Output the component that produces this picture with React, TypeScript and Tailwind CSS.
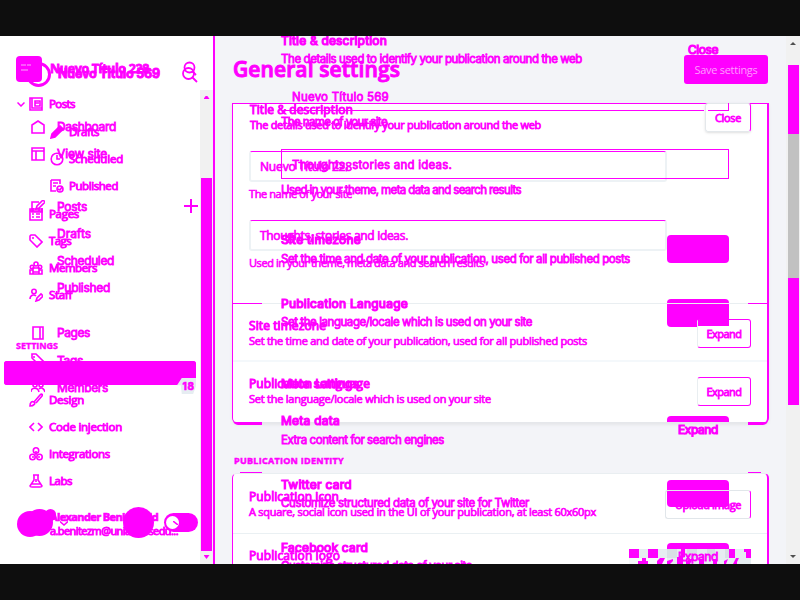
import { useLayoutEffect, useRef, useState, type ReactNode } from 'react';

const segoe = "font-['Open_Sans','Noto_Sans',sans-serif]";
const inter = "font-['Inter','Noto_Sans',sans-serif]";

/** One line of text whose tracking is fitted to the given width. */
function Line({ text, w, className = '' }: { text: string; w: number; className?: string }) {
  const ref = useRef<HTMLSpanElement>(null);
  const [spacing, setSpacing] = useState(0);
  useLayoutEffect(() => {
    if (ref.current) setSpacing((w - ref.current.getBoundingClientRect().width) / text.length);
  }, [text, w]);
  return (
    <span ref={ref} style={{ letterSpacing: spacing }} className={`inline-block whitespace-nowrap text-[#f0f] ${className}`}>
      {text}
    </span>
  );
}

function Icon({ children, className = '' }: { children: ReactNode; className?: string }) {
  return (
    <svg viewBox="0 0 14 14" className={`h-3.5 w-3.5 shrink-0 fill-none stroke-[#f0f] stroke-[1.6] ${className}`}>
      {children}
    </svg>
  );
}

function Item({ icon, text, w, sub = false }: { icon: ReactNode; text: string; w: number; sub?: boolean }) {
  return (
    <div className={`flex h-[27px] shrink-0 items-center ${sub ? 'gap-[5px] pl-[50px]' : 'gap-1.5 pl-[29px]'}`}>
      {icon}
      <Line text={text} w={w} className={`text-[11.5px] leading-4 [-webkit-text-stroke:0.9px_#f0f] ${segoe}`} />
    </div>
  );
}

function Sidebar() {
  return (
    <aside className="flex w-[215px] shrink-0 border-r-2 border-[#f0f] bg-white">
      <div className="flex w-[200px] flex-col">
        <header className="flex h-[54px] shrink-0 items-start pl-4 pt-5">
          <div className="h-[26px] w-[26px] rounded-[4px] bg-[#f0f]" />
          <Line text="Nuevo Título 228" w={99} className={`ml-2 text-[12.5px] font-bold leading-[26px] [-webkit-text-stroke:0.8px_#f0f] ${segoe}`} />
        </header>
        <div className="relative">
          <Item text="Posts" w={26} icon={<Icon><path d="M1 1h12v12H1z M3 1v10h10 M6 4h5v5H6z M6 6h4" /></Icon>} />
          <svg viewBox="0 0 8 5" className="absolute left-[17px] top-3 h-[5px] w-2 fill-none stroke-[#f0f] stroke-[1.5]"><path d="M.5.5 4 4 7.5.5" /></svg>
        </div>
        <div className="mt-px">
          <Item sub text="Drafts" w={30} icon={<Icon><path className="fill-[#f0f]" d="M1 13l1-4 8-8 3 3-8 8z" /></Icon>} />
          <Item sub text="Scheduled" w={54} icon={<Icon><circle cx="7" cy="7" r="5.8" /><path d="M7 3v4h3" /></Icon>} />
          <Item sub text="Published" w={49} icon={<Icon><path d="M1 1h9v4 M1 1v11h5 M3 4h5 M3 7h3" /><circle cx="10" cy="10" r="3" /><path d="M8 10l2 1 2-3" /></Icon>} />
        </div>
        <div className="mt-px">
          <Item text="Pages" w={30} icon={<Icon><path d="M1 2h12v11H1z M1 4h12 M4 1v3 M10 1v3 M3 7h2 M7 7h4 M3 10h2 M7 10h4" /></Icon>} />
          <Item text="Tags" w={22} icon={<Icon><path d="M1 2v4l7 7 5-5-7-7H2z M4 3v2" /></Icon>} />
          <Item text="Members" w={48} icon={<Icon><circle cx="7" cy="3" r="2" /><circle cx="3" cy="6" r="1.7" /><circle cx="11" cy="6" r="1.7" /><path d="M1 13V9h3V7h6v2h3v4z M4 9v4 M10 9v4 M4 11h6" /></Icon>} />
          <Item text="Staff" w={23} icon={<Icon><circle cx="5" cy="3.5" r="2.2" /><path d="M1 11c0-4 4-5 6-3 M7 13l1-3 4-4 2 2-4 4z" /></Icon>} />
        </div>
        <Line text="SETTINGS" w={42} className={`ml-4 mt-[30px] self-start text-[9px] font-bold leading-4 [-webkit-text-stroke:0.4px_#f0f] ${segoe}`} />
        <div className="ml-1 mt-[7px] h-6 w-48 shrink-0 rounded-[3px] bg-[#f0f]" />
        <div className="mt-px">
          <Item text="Design" w={35} icon={<Icon><path d="M1 13c0-4 2-5 4-4s0 4-4 4z M5 9l6-7c2-2 3 0 2 1L7 10" /></Icon>} />
          <Item text="Code injection" w={73} icon={<Icon><path d="M5 3 1 7l4 4 M9 3l4 4-4 4" /></Icon>} />
          <Item text="Integrations" w={61} icon={<Icon><circle cx="7" cy="3.5" r="2.7" /><circle cx="3.5" cy="10" r="2.7" /><circle cx="10.5" cy="10" r="2.7" /><path d="M7 4v4 M3 10h2 M9 10h2" /></Icon>} />
          <Item text="Labs" w={23} icon={<Icon><path d="M4 1h6 M5 1v5L1 12q0 1 2 1h8q2 0 2-1L9 6V1 M3 10h8 M7 5v3" /></Icon>} />
        </div>
        <footer className="mt-[16px] flex h-7 items-start">
          <div className="mt-px h-[26px] w-[26px] shrink-0 translate-x-[17px] rounded-full bg-[#f0f]" />
          <div className="ml-6 flex flex-col">
            <Line text="Alexander Benitez Md" w={108} className={`self-start text-[11px] font-bold leading-[14px] [-webkit-text-stroke:0.7px_#f0f] ${segoe}`} />
            <Line text="a.benitezm@uniandesedu..." w={128} className={`self-start text-[11px] leading-[14px] [-webkit-text-stroke:0.9px_#f0f] ${segoe}`} />
          </div>
        </footer>
      </div>
      <div className="mt-[54px] flex w-[13px] shrink-0 flex-col items-center bg-[#f1f1f1]">
        <div className="mt-1.5 h-[3px] w-1.5 bg-[#f0f] [clip-path:polygon(35%_0,65%_0,100%_100%,0_100%)]" />
        <div className="mt-[79px] h-[373px] w-[11px] bg-[#f0f]" />
        <div className="mt-1 h-1 w-1.5 bg-[#f0f] [clip-path:polygon(0_0,100%_0,50%_100%)]" />
      </div>
    </aside>
  );
}

function Setting({ title, tw, text, w, strip = false }: { title: string; tw: number; text: string; w: number; strip?: boolean }) {
  return (
    <div className="flex justify-between">
      <div className="-mt-px flex flex-col items-start">
        <Line text={title} w={tw} className={`text-[12px] leading-[15px] [-webkit-text-stroke:1px_#f0f] ${segoe}`} />
        <Line text={text} w={w} className={`text-[11px] leading-[15px] [-webkit-text-stroke:0.7px_#f0f] ${segoe}`} />
      </div>
      <div className="relative z-10 flex h-[29px] w-[54px] items-center justify-center rounded-[3px] border border-[#f0f] border-l-[#e9eef1] bg-white">
        {strip && <div className="absolute left-0 top-0 h-1.5 w-[31px] bg-[#f0f]" />}
        <Line text="Expand" w={35} className={`text-[11px] leading-4 [-webkit-text-stroke:0.8px_#f0f] ${segoe}`} />
      </div>
    </div>
  );
}

function Field({ value, vw, help, hw }: { value: string; vw: number; help: string; hw: number }) {
  return (
    <div className="flex flex-col items-start">
      <div className="flex h-[31px] w-[418px] items-center rounded-[3px] border-x-2 border-b-2 border-t border-[#edf2f5] border-t-[#f0f] pl-[9px] pt-0.5">
        <Line text={value} w={vw} className={`text-[12px] leading-4 [-webkit-text-stroke:0.7px_#f0f] ${segoe}`} />
      </div>
      <Line text={help} w={hw} className={`mt-1 text-[11px] leading-4 [-webkit-text-stroke:0.6px_#f0f] ${segoe}`} />
    </div>
  );
}

function Main() {
  return (
    <main className="flex w-[571px] shrink-0 flex-col bg-[#f3f4f8] pl-[17px]">
      <header className="flex h-[67px] w-[536px] shrink-0 items-start justify-between pt-[19px]">
        <Line text="General settings" w={167} className={`ml-px text-[21px] font-semibold leading-7 [-webkit-text-stroke:1px_#f0f] ${segoe}`} />
        <div className="flex h-[29px] w-[84px] items-center justify-center rounded-[3px] bg-[#f0f]">
          <Line text="Save settings" w={63} className={`text-[11px] leading-4 !text-[#ff9dff] ${segoe}`} />
        </div>
      </header>
      <section className="h-80 w-[537px] shrink-0 rounded-b-[5px] border border-r-2 border-[#f0f] border-b-[#e5e7eb] bg-white shadow-[0_2px_3px_#e5e6e9]">
        <div className="flex h-[200px] flex-col border-b border-[#e9eef1] px-4">
          <div className="-mt-px flex h-[48px] justify-between">
            <div className="-mt-px flex flex-col items-start pl-px">
              <Line text="Title & description" w={103} className={`text-[12px] leading-[15px] [-webkit-text-stroke:1px_#f0f] ${segoe}`} />
              <Line text="The details used to identify your publication around the web" w={291} className={`text-[11px] leading-[15px] [-webkit-text-stroke:0.8px_#f0f] ${segoe}`} />
            </div>
            <div className="flex h-[29px] w-[46px] items-center justify-center rounded-[3px] border border-[#e4e8eb] border-r-[#f0f] shadow-sm">
              <Line text="Close" w={26} className={`text-[11px] leading-4 [-webkit-text-stroke:0.8px_#f0f] ${segoe}`} />
            </div>
          </div>
          <Field value="Nuevo Título 228" vw={92} help="The name of your site" hw={103} />
          <div className="mt-[18px]"><Field value="Thoughts, stories and ideas." vw={148} help="Used in your theme, meta data and search results" hw={235} /></div>
        </div>
        <div className="h-[58px] border-b-2 border-[#f4f8fb] px-4 pt-[15px]">
          <Setting title="Site timezone" tw={77} text="Set the time and date of your publication, used for all published posts" w={338} strip />
        </div>
        <div className="px-4 pt-[15px]">
          <Setting title="Publication Language" tw={121} text="Set the language/locale which is used on your site" w={242} />
        </div>
      </section>
      <Line text="PUBLICATION IDENTITY" w={110} className={`ml-0.5 mt-[30px] self-start text-[9px] font-bold leading-4 [-webkit-text-stroke:0.5px_#f0f] ${segoe}`} />
      <section className="mt-1 h-[100px] w-[537px] shrink-0 rounded-t-[5px] border border-r-2 border-[#f0f] border-t-[#e9eef1] bg-white">
        <div className="h-[60px] border-b border-[#eaf0f3] px-4 pt-4">
          <div className="flex justify-between">
            <div className="-mt-px flex flex-col items-start">
              <Line text="Publication icon" w={90} className={`text-[12px] leading-[15px] [-webkit-text-stroke:0.9px_#f0f] ${segoe}`} />
              <Line text="A square, social icon used in the UI of your publication, at least 60x60px" w={347} className={`text-[11px] leading-[15px] [-webkit-text-stroke:0.7px_#f0f] ${segoe}`} />
            </div>
            <div className="relative z-20 flex h-[29px] w-[86px] items-center justify-center rounded-[3px] border border-[#e1e6ea] border-r-[#f0f]">
              <Line text="Upload image" w={66} className={`text-[11px] leading-4 [-webkit-text-stroke:0.8px_#f0f] ${segoe}`} />
            </div>
          </div>
        </div>
        <div className="flex justify-between pl-4 pr-4 pt-[14px]">
          <Line text="Publication logo" w={91} className={`text-[12px] leading-[15px] [-webkit-text-stroke:0.9px_#f0f] ${segoe}`} />
          <svg viewBox="0 0 122 15" className="mt-px h-[15px] w-[122px]">
            <path fill="#e6edf1" d="M0 0h122v15H0z" />
            <path fill="#f7f9fb" d="M0 9h38v6H0z" />
            <path fill="#d8e0e5" d="M38 0h10v9H38z M58 0h10v9H58z M78 0h8v9h-8z M96 0h4v9h-4z" />
            <path fill="#f0f" d="M0 0h10v9H0z M19 0h10v9H19z M52 0h4v8h-2v7h-6V8h4z M100 0h6v9h-6z M115 0h7v9h-5V3h-2z M9 12h4V9h4v3h2v3H9z M28 15v-3l3-3h5l-3 6z M38 12l6-2v2l-3 3h-3z M57 12l7-3-3 6h-4z M70 10h5v5h-5z M84 10h4v5h-4z M95 12l4-2-2 5h-2z M107 9h3l-2 4v2h-4z" />
          </svg>
        </div>
      </section>
    </main>
  );
}

function Navigation() {
  const rows: [string, number, string][] = [
    ['Dashboard', 59, 'left-[57px] top-[119px]'], ['View site', 50, 'left-[57px] top-[146px]'],
    ['Posts', 30, 'left-[57px] top-[199px]'], ['Drafts', 34, 'left-[57px] top-[226px]'],
    ['Scheduled', 57, 'left-[57px] top-[253px]'], ['Published', 53, 'left-[57px] top-[280px]'],
    ['Pages', 33, 'left-[57px] top-[325px]'], ['Tags', 26, 'left-[57px] top-[353px]'], ['Members', 51, 'left-[57px] top-[380px]'],
  ];
  return (
    <>
      {rows.map(([text, w, place]) => (
        <Line key={text} text={text} w={w} className={`absolute text-[12px] leading-4 [-webkit-text-stroke:0.8px_#f0f] ${inter} ${place}`} />
      ))}
      <Icon className="absolute left-[31px] top-[120px]"><path d="M1 5l6-4 6 4v8H1z" /></Icon>
      <Icon className="absolute left-[31px] top-[147px]"><path d="M1 1h12v12H1z M1 4h12 M5 4v9" /></Icon>
      <Icon className="absolute left-[31px] top-[200px]"><path d="M8 2H1v10h10V8 M5 9l1-3 6-6 2 2-6 6z" /></Icon>
      <Icon className="absolute left-[31px] top-[326px]"><path d="M2 1h10v12H2z M9 1v12" /></Icon>
      <Icon className="absolute left-[31px] top-[353px]"><path d="M1 1h4l8 8-4 4-8-8z M3 3v2" /></Icon>
      <Icon className="absolute left-[31px] top-[380px]"><circle cx="4" cy="5" r="2" /><circle cx="10" cy="5" r="2" /><path d="M0 12c0-5 7-5 8 0 M8 9c2-2 5-1 6 3" /></Icon>
      <div className="absolute left-1 top-[361px] h-6 w-48 rounded-[3px] bg-[#f0f]" />
      <div className="absolute left-[177px] top-[378px] flex h-4 w-[19px] items-center justify-center bg-[#e6edf2] pl-1 [clip-path:polygon(25%_0,100%_0,100%_50%,85%_100%,25%_100%,20%_45%,0_45%)]">
        <Line text="18" w={12} className={`text-[10px] font-bold leading-3 [-webkit-text-stroke:0.6px_#f0f] ${inter}`} />
      </div>
      <svg viewBox="0 0 14 14" className="absolute left-[184px] top-[199px] h-3.5 w-3.5 stroke-[#f0f] stroke-2"><path d="M7 0v14 M0 7h14" /></svg>
      <svg viewBox="0 0 18 22" className="absolute left-[181px] top-[61px] h-[22px] w-[18px] fill-none stroke-[#f0f] stroke-[1.8]"><circle cx="8.5" cy="6.5" r="5" /><circle cx="7.5" cy="12.5" r="5.5" /><path d="M11 16l5 5 M11 10l4 4" /></svg>
      <div className="absolute left-[26px] top-[62px] h-[25px] w-[25px] rounded-full border-[3px] border-[#f0f]" />
      <svg viewBox="0 0 14 10" className="absolute left-[21px] top-[64px] h-2.5 w-3.5 stroke-[#f7d7f7] stroke-[.8]"><path d="M0 1h5 M6 1h4 M0 6h7" /></svg>
      <Line text="Nuevo Título 569" w={102} className={`absolute left-[58px] top-[66px] text-[12.5px] font-bold leading-4 [-webkit-text-stroke:0.9px_#f0f] ${inter}`} />
      <div className="absolute left-[26px] top-[509px] h-[27px] w-[27px] rounded-full bg-[#f0f]" />
      <div className="absolute left-[45px] top-[509px] h-3 w-[11px] rounded-full bg-[#f0f]" />
      <div className="absolute left-[123px] top-[507px] h-[31px] w-[31px] rounded-full bg-[#f0f]" />
      <div className="absolute left-[164px] top-[513px] h-[19px] w-[34px] rounded-full bg-[#f0f]"><div className="ml-0.5 mt-[3px] h-[13px] w-[13px] rounded-full bg-white" /></div>
      <svg viewBox="0 0 8 5" className="absolute left-[60px] top-[521px] h-[5px] w-2 fill-none stroke-[#f0f] stroke-[1.5]"><path d="M0 .5 4 4 8 .5" /></svg>
      <svg viewBox="0 0 5 4" className="absolute left-[173px] top-[521px] h-1 w-[5px] stroke-[#f0f] stroke-[1.5]"><path d="M0 0l5 4" /></svg>
    </>
  );
}

function SettingsLayer() {
  const rows: [string, number, string, boolean][] = [
    ['Title & description', 106, 'left-[281px] top-[33px]', true],
    ['The details used to identify your publication around the web', 301, 'left-[281px] top-[51px]', false],
    ['Nuevo Título 569', 97, 'left-[292px] top-[89px]', false],
    ['The name of your site', 106, 'left-[281px] top-[114px]', false],
    ['Thoughts, stories and ideas.', 160, 'left-[292px] top-[157px]', false],
    ['Used in your theme, meta data and search results', 240, 'left-[281px] top-[182px]', false],
    ['Site timezone', 80, 'left-[281px] top-[232px]', true],
    ['Set the time and date of your publication, used for all published posts', 349, 'left-[281px] top-[251px]', false],
    ['Publication Language', 127, 'left-[281px] top-[296px]', true],
    ['Set the language/locale which is used on your site', 251, 'left-[281px] top-[314px]', false],
    ['Meta settings', 78, 'left-[281px] top-[376px]', true],
    ['Meta data', 59, 'left-[281px] top-[413px]', true],
    ['Extra content for search engines', 163, 'left-[281px] top-[432px]', false],
    ['Twitter card', 71, 'left-[281px] top-[477px]', true],
    ['Customize structured data of your site for Twitter', 248, 'left-[281px] top-[495px]', false],
    ['Facebook card', 87, 'left-[281px] top-[540px]', true],
    ['Customize structured data of your site', 191, 'left-[281px] top-[558px]', false],
    ['Close', 30, 'left-[688px] top-[42px]', true],
    ['Expand', 40, 'left-[678px] top-[422px]', true],
  ];
  return (
    <>
      <div className="absolute left-[232px] top-[303px] h-px w-[30px] bg-[#f0f]" />
      <div className="absolute left-[748px] top-[303px] h-px w-5 bg-[#f0f]" />
      <div className="absolute left-[233px] top-[420px] h-[5px] w-[29px] rounded-bl-[8px] border-b-[3px] border-[#f0f]" />
      <div className="absolute left-[748px] top-[420px] h-[5px] w-[20px] rounded-br-[8px] border-b-[3px] border-[#f0f]" />
      <div className="absolute left-[240px] top-[472px] h-px w-[22px] bg-[#f0f]" />
      <div className="absolute left-[748px] top-[472px] h-px w-[13px] bg-[#f0f]" />
      <div className="absolute left-[281px] top-[110px] h-px w-[423px] bg-[#f0f]" />
      <div className="absolute left-[708px] top-[103px] h-2 w-[21px] border-b border-r border-[#f0f]" />
      <div className="absolute left-[281px] top-[149px] h-[30px] w-[448px] border border-[#f0f]" />
      <div className="absolute left-[667px] top-[235px] h-7 w-[62px] rounded-sm bg-[#f0f]" />
      <div className="absolute left-[667px] top-[299px] h-7 w-[62px] rounded-sm bg-[#f0f]" />
      <div className="absolute left-[667px] top-[303px] h-px w-[62px] bg-[#e9eef1]" />
      <div className="absolute left-[667px] top-[416px] h-[6px] w-[62px] rounded-t-sm bg-[#f0f]" />
      <div className="absolute left-[667px] top-[480px] h-[27px] w-[62px] rounded-sm bg-[#f0f]" />
      <div className="absolute left-[667px] top-[490px] h-px w-[62px] bg-[#e1e6ea]" />
      <div className="absolute left-[667px] top-[543px] h-[6px] w-[62px] rounded-t-sm bg-[#f0f]" />
      <Line text="Expand" w={40} className={`absolute left-[678px] top-[549px] text-[12px] leading-4 [-webkit-text-stroke:0.8px_#f0f] ${inter}`} />
      {rows.map(([text, w, place, bold]) => (
        <Line key={text} text={text} w={w} className={`absolute leading-4 ${inter} ${bold ? 'text-[12px] [-webkit-text-stroke:1.2px_#f0f]' : 'text-[11.5px] [-webkit-text-stroke:0.8px_#f0f]'} ${place}`} />
      ))}
    </>
  );
}

export default function App() {
  return (
    <div className="relative flex h-[600px] w-[800px] flex-col overflow-hidden bg-[#0e0e0e]">
      <div className="mt-9 flex h-[528px] overflow-hidden">
        <Sidebar />
        <Main />
        <div className="flex w-3.5 flex-col items-center bg-[#f1f1f1]">
          <div className="mt-1.5 h-[3px] w-1.5 bg-[#505050] [clip-path:polygon(50%_0,100%_100%,0_100%)]" />
          <div className="ml-px mt-5 h-[69px] w-[11px] bg-[#f0f]" />
          <div className="ml-px h-36 w-[11px] bg-[#c1c1c1]" />
          <div className="ml-px h-[127px] w-[11px] bg-[#f0f]" />
          <div className="mt-[150px] h-[3px] w-1.5 bg-[#505050] [clip-path:polygon(0_0,100%_0,50%_100%)]" />
        </div>
      </div>
      <div className="absolute inset-0 [clip-path:inset(36px_0)]">
        <Navigation />
        <SettingsLayer />
      </div>
    </div>
  );
}
